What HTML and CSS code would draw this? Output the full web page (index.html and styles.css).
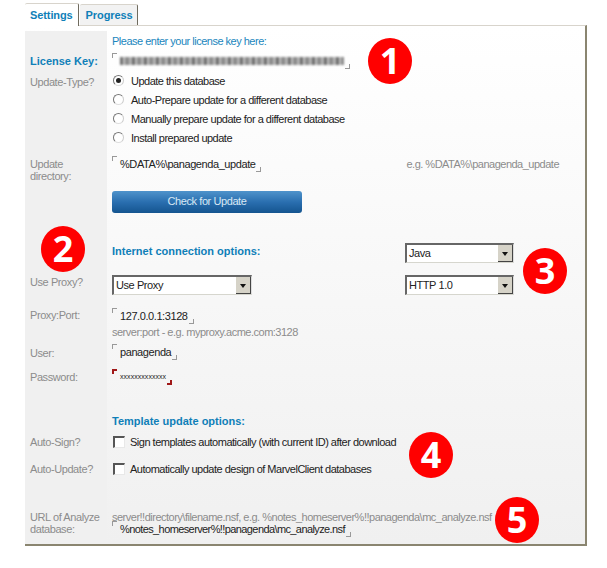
FILE: index.html
```html
<!DOCTYPE html>
<html lang="en">
<head>
    <meta charset="UTF-8">
    <title>Settings</title>
    <link rel="stylesheet" href="styles.css">
</head>
<body>
    <div class="tabs">
        <div class="tab tab-active">Settings</div>
        <div class="tab">Progress</div>
    </div>
    <div class="panel">
        <div class="row r-intro">
            <div class="label"></div>
            <div class="value link-text">Please enter your license key here:</div>
        </div>
        <div class="row r-license">
            <div class="label label-strong">License Key:</div>
            <div class="value"><span class="field"><span class="blurred"></span></span></div>
        </div>
        <div class="row r-type">
            <div class="label label-type">Update-Type?</div>
            <div class="value">
                <div class="option"><span class="radio radio-on"></span>Update this database</div>
                <div class="option"><span class="radio"></span>Auto-Prepare update for a different database</div>
                <div class="option"><span class="radio"></span>Manually prepare update for a different database</div>
                <div class="option"><span class="radio"></span>Install prepared update</div>
            </div>
        </div>
        <div class="row r-dir">
            <div class="label">Update<br>directory:</div>
            <div class="value value-split">
                <span class="field">%DATA%\panagenda_update</span>
                <span class="hint">e.g. %DATA%\panagenda_update</span>
            </div>
        </div>
        <div class="row r-button">
            <div class="label"></div>
            <div class="value"><div class="check-button">Check for Update</div></div>
        </div>
        <div class="row r-internet">
            <div class="label"></div>
            <div class="value value-split">
                <span class="heading">Internet connection options:</span>
                <div class="combo combo-small">Java<span class="arrow"></span></div>
            </div>
        </div>
        <div class="row r-proxy">
            <div class="label">Use Proxy?</div>
            <div class="value value-split">
                <div class="combo combo-wide">Use Proxy<span class="arrow"></span></div>
                <div class="combo combo-small">HTTP 1.0<span class="arrow"></span></div>
            </div>
        </div>
        <div class="row r-port">
            <div class="label">Proxy:Port:</div>
            <div class="value">
                <span class="field">127.0.0.1:3128</span>
                <div class="hint">server:port - e.g. myproxy.acme.com:3128</div>
            </div>
        </div>
        <div class="row r-user">
            <div class="label">User:</div>
            <div class="value"><span class="field">panagenda</span></div>
        </div>
        <div class="row r-pass">
            <div class="label">Password:</div>
            <div class="value"><span class="field field-required"><span class="stars">xxxxxxxxxxxxx</span></span></div>
        </div>
        <div class="row r-template">
            <div class="label"></div>
            <div class="value heading">Template update options:</div>
        </div>
        <div class="row r-sign">
            <div class="label">Auto-Sign?</div>
            <div class="value option"><span class="check"></span>Sign templates automatically (with current ID) after download</div>
        </div>
        <div class="row r-auto">
            <div class="label">Auto-Update?</div>
            <div class="value option"><span class="check"></span>Automatically update design of MarvelClient databases</div>
        </div>
        <div class="row r-url">
            <div class="label">URL of Analyze<br>database:</div>
            <div class="value">
                <div class="hint">server!!directory\filename.nsf, e.g. %notes_homeserver%!!panagenda\mc_analyze.nsf</div>
                <span class="field">%notes_homeserver%!!panagenda\mc_analyze.nsf</span>
            </div>
        </div>
    </div>

    <div class="badge b1">1</div>
    <div class="badge b2">2</div>
    <div class="badge b3">3</div>
    <div class="badge b4">4</div>
    <div class="badge b5">5</div>
</body>
</html>
```

FILE: styles.css
```css
html, body {
    margin: 0;
    padding: 0;
    background: #fff;
}
body {
    position: relative;
    width: 607px;
    height: 568px;
    overflow: hidden;
    font-family: "Liberation Sans", Arial, sans-serif;
    font-size: 11px;
    letter-spacing: -0.42px;
    color: #222;
}

/* tabs */
.tabs {
    position: relative;
    display: flex;
    gap: 1px;
    height: 22px;
    padding: 3px 0 0 25px;
}
.tab {
    display: flex;
    align-items: center;
    margin-top: 1px;
    padding: 0 5px 0 6px;
    border-top: 1px solid #d8d4cc;
    border-right: 1px solid #6f6b5e;
    border-radius: 2px 2px 0 0;
    background: #f2f2f2;
    color: #0f7fb8;
    font-weight: bold;
    font-size: 11px;
    letter-spacing: -0.1px;
}
.tab-active {
    margin-top: 0;
    margin-bottom: -1px;
    padding: 0 5px 1px 5px;
    background: #fff;
}

/* main panel */
.panel {
    box-sizing: border-box;
    width: 562px;
    height: 521px;
    margin-left: 25px;
    padding-top: 7px;
    border-top: 1px solid #d8d4cc;
    border-right: 2px solid #8a8570;
    border-bottom: 2px solid #8a8570;
    background:
        linear-gradient(#f0f0f0, #f0f0f0) no-repeat left bottom / 82px calc(100% - 5px),
        linear-gradient(#fff, #f0f0f0);
}
.row {
    display: flex;
}
.label {
    box-sizing: border-box;
    flex: 0 0 87px;
    padding-left: 5px;
    color: #8c8c8c;
    line-height: 12px;
}
.label-strong {
    color: #0f7fb8;
    font-weight: bold;
    letter-spacing: 0;
    line-height: 16px;
}
.label-type {
    padding-top: 5px;
}
.value {
    width: 454px;
}
.value-split {
    display: flex;
    justify-content: space-between;
    align-items: flex-start;
}
.link-text {
    color: #1a86bd;
    letter-spacing: -0.5px;
    line-height: 16px;
}
.option {
    letter-spacing: -0.5px;
}
.hint {
    color: #8c8c8c;
    letter-spacing: -0.5px;
    line-height: 14px;
}
.heading {
    color: #0f7fb8;
    font-weight: bold;
    letter-spacing: 0;
    line-height: 14px;
}

/* row spacing */
.r-license { margin-top: 4px; height: 18px; }
.r-type { margin-top: 0; }
.r-dir { margin-top: 11px; height: 26px; }
.r-dir .value-split { margin-top: -2px; padding-right: 7px; box-sizing: border-box; }
.r-dir .hint { line-height: 16px; }
.r-button { margin-top: 7px; }
.r-internet { margin-top: 30px; height: 20px; }
.r-internet .heading { margin-top: 1px; }
.r-proxy { margin-top: 12px; height: 20px; }
.r-proxy .label { padding-top: 1px; }
.r-internet .value-split, .r-proxy .value-split { padding-right: 71px; box-sizing: border-box; width: 474px; }
.r-port { margin-top: 13px; }
.r-port .hint { margin-top: 1px; }
.r-user { margin-top: 5px; }
.r-user .label { padding-top: 3px; }
.r-pass .label { padding-top: 2px; }
.r-port .label { padding-top: 1px; }
.r-pass { margin-top: 9px; height: 16px; }
.r-template { margin-top: 29px; }
.r-sign { margin-top: 6px; }
.r-sign .label, .r-auto .label { line-height: 16px; }
.r-auto { margin-top: 11px; }
.r-url { margin-top: 34px; }
.r-url .hint { line-height: 12px; }
.r-url .field { margin-top: -3px; letter-spacing: -0.6px; }

/* notes style input field with corner marks */
.field {
    display: inline-flex;
    align-items: center;
    position: relative;
    height: 16px;
    padding: 0 6px 0 8px;
    line-height: 16px;
}
.field::before, .field::after {
    content: "";
    position: absolute;
    width: 4px;
    height: 4px;
    border: 0 solid #999;
}
.field::before {
    left: 0;
    top: 0;
    border-width: 1px 0 0 1px;
}
.field::after {
    right: 0;
    bottom: 0;
    border-width: 0 1px 1px 0;
}
.field-required::before, .field-required::after {
    border-color: #a01818;
    border-width: 2px;
    width: 3px;
    height: 3px;
}
.field-required::before { border-right: 0; border-bottom: 0; }
.field-required::after { border-left: 0; border-top: 0; }
.stars {
    font-size: 7px;
    letter-spacing: 0.05px;
}
.blurred {
    display: block;
    width: 224px;
    height: 8px;
    background: repeating-linear-gradient(90deg, #6e6e6e 0 3px, #c4c4c4 3px 5px, #8c8c8c 5px 9px, #b4b4b4 9px 12px);
    filter: blur(1.3px);
}

/* radio and checkbox options */
.option {
    display: flex;
    align-items: center;
    height: 19px;
}
.radio {
    box-sizing: border-box;
    position: relative;
    width: 11px;
    height: 11px;
    margin: 0 7px 0 1px;
    border: 1px solid #777;
    border-right-color: #ccc;
    border-bottom-color: #ddd;
    border-radius: 50%;
    background: #fff;
}
.radio-on::after {
    content: "";
    position: absolute;
    left: 2px;
    top: 2px;
    width: 5px;
    height: 5px;
    border-radius: 50%;
    background: #222;
}
.check {
    box-sizing: border-box;
    width: 12px;
    height: 12px;
    margin: 0 5px 0 1px;
    border: 1px solid #e8e8e8;
    border-top: 2px solid #555;
    border-left: 2px solid #555;
    background: #fff;
}
.option.value {
    height: 16px;
}

/* blue button */
.check-button {
    width: 190px;
    height: 22px;
    border-radius: 3px;
    background: linear-gradient(#4f93cb, #2a6fb0 50%, #14548f);
    color: #d8e8f4;
    text-align: center;
    line-height: 21px;
}

/* dropdowns */
.combo {
    box-sizing: border-box;
    position: relative;
    height: 20px;
    padding-left: 2px;
    border: 2px solid #666;
    border-right-color: #ddd;
    border-bottom-color: #d6d6ce;
    border-right-width: 1px;
    border-bottom-width: 1px;
    background: #fff;
    line-height: 17px;
}
.combo-small {
    width: 109px;
}
.combo-wide {
    width: 140px;
}
.arrow {
    position: absolute;
    right: 0;
    top: 0;
    width: 15px;
    height: 17px;
    box-sizing: border-box;
    border-right: 1px solid #444;
    border-bottom: 1px solid #444;
    background: #d6d3c8;
}
.arrow::after {
    content: "";
    position: absolute;
    left: 4px;
    top: 7px;
    border: 3px solid transparent;
    border-top: 4px solid #111;
    border-bottom: 0;
}

/* red number callouts, laid over the screenshot */
.badge {
    position: absolute;
    width: 44px;
    height: 46px;
    border-radius: 50%;
    background: #f00;
    color: #fff;
    font-family: "Open Sans", sans-serif;
    font-weight: bold;
    font-size: 36px;
    letter-spacing: 0;
    line-height: 45px;
    text-align: center;
}
.b1 { left: 368px; top: 38px; }
.b2 { left: 41px; top: 226px; }
.b3 { left: 523px; top: 248px; }
.b4 { left: 409px; top: 432px; }
.b5 { left: 495px; top: 497px; }
```
